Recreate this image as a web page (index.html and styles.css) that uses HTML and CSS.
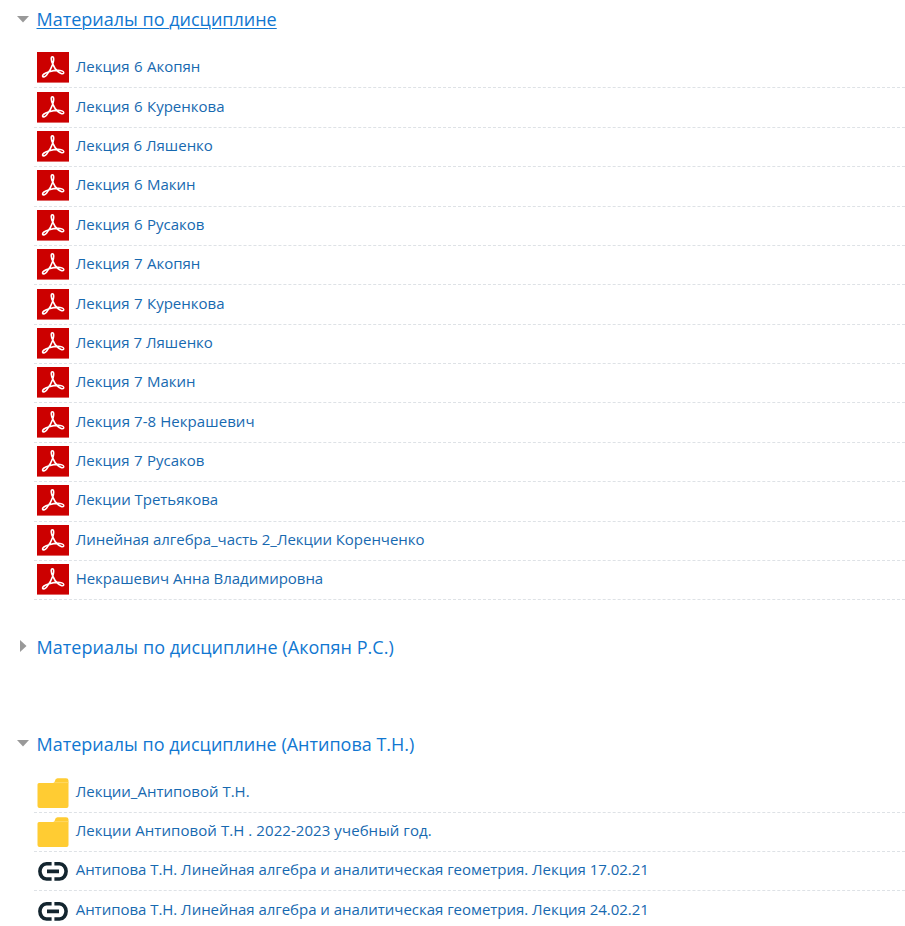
FILE: index.html
```html
<!DOCTYPE html>
<html lang="ru">
<head>
<meta charset="utf-8">
<title>Материалы по дисциплине</title>
<link rel="stylesheet" href="styles.css">
</head>
<body>
<svg class="sprite" aria-hidden="true">
  <symbol id="pdf" viewBox="0 0 32 31">
    <path fill="#c00" d="M0 0h32v30.6H0z"/>
    <path fill="none" stroke="#fff" stroke-width="1.6" stroke-linejoin="round" d="M15.8 12.1C13.9 8.3 13.7 4.7 15.4 4.7S17 8.4 15.8 12.1C14.7 15.6 12.2 20 9.5 23.2C7.7 25.3 5.9 25.2 5.6 24.2C5.2 22.7 8.4 20.7 12.1 19.7C16 18.7 20 18.2 23 18.5C26 18.8 27.1 20 26.6 21.1C25.9 22.5 22.8 21.5 20.4 19.2C18.2 17.1 16.7 14.2 15.8 12.1Z"/>
  </symbol>
  <symbol id="folder" viewBox="0 0 32 31">
    <path fill="#fc3" d="M2 5h14q1.700 0 2-2.300Q18.300.2 20.500.2H29q2.500 0 2.500 2.400V28q0 2-2 2H2.500q-2 0-2-2V6.500Q.5 5 2 5z"/>
    <path stroke="#ffdb70" stroke-width=".8" d="M17 4.600h14.500"/>
  </symbol>
  <symbol id="link" viewBox="0 0 32 31">
    <path fill="none" stroke="#13252f" stroke-width="3.600" d="M14.600 7.700H9.500C5.500 7.700 2.900 11.500 2.900 15.300S5.500 23 9.500 23h5.100M17.400 7.700h5.100c4 0 6.600 3.800 6.600 7.600S26.500 23 22.500 23h-5.100M10 15.400h12"/>
  </symbol>
  <symbol id="down" viewBox="0 0 12 7"><path fill="#999" d="M0 0h12L6 6.500z"/></symbol>
  <symbol id="right" viewBox="0 0 7 12"><path fill="#999" d="M0 0l6.500 6L0 12z"/></symbol>
</svg>
<main>
  <section class="topic first">
    <h3 class="heading"><svg class="down"><use href="#down"/></svg><a class="active">Материалы по дисциплине</a></h3>
    <ul class="list">
      <li><svg><use href="#pdf"/></svg><a class="spaced">Лекция 6 Акопян</a></li>
      <li><svg><use href="#pdf"/></svg><a class="spaced">Лекция 6 Куренкова</a></li>
      <li><svg><use href="#pdf"/></svg><a>Лекция 6 Ляшенко</a></li>
      <li><svg><use href="#pdf"/></svg><a class="spaced">Лекция 6 Макин</a></li>
      <li><svg><use href="#pdf"/></svg><a class="spaced">Лекция 6 Русаков</a></li>
      <li><svg><use href="#pdf"/></svg><a class="spaced">Лекция 7 Акопян</a></li>
      <li><svg><use href="#pdf"/></svg><a class="spaced">Лекция 7 Куренкова</a></li>
      <li><svg><use href="#pdf"/></svg><a>Лекция 7 Ляшенко</a></li>
      <li><svg><use href="#pdf"/></svg><a class="spaced">Лекция 7 Макин</a></li>
      <li><svg><use href="#pdf"/></svg><a class="wide">Лекция 7-8 Некрашевич</a></li>
      <li><svg><use href="#pdf"/></svg><a class="spaced">Лекция 7 Русаков</a></li>
      <li><svg><use href="#pdf"/></svg><a class="tight">Лекции Третьякова</a></li>
      <li><svg><use href="#pdf"/></svg><a class="tight">Линейная алгебра_часть 2_Лекции Коренченко</a></li>
      <li><svg><use href="#pdf"/></svg><a class="tight">Некрашевич Анна Владимировна</a></li>
    </ul>
  </section>
  <section class="topic closed">
    <h3 class="heading"><svg class="right"><use href="#right"/></svg><a class="loose">Материалы по дисциплине (Акопян Р.С.)</a></h3>
  </section>
  <section class="topic last">
    <h3 class="heading"><svg class="down"><use href="#down"/></svg><a>Материалы по дисциплине (Антипова Т.Н.)</a></h3>
    <ul class="list files">
      <li><svg><use href="#folder"/></svg><a>Лекции_Антиповой Т.Н.</a></li>
      <li><svg><use href="#folder"/></svg><a class="wide">Лекции Антиповой Т.Н . 2022-2023 учебный год.</a></li>
      <li><svg><use href="#link"/></svg><a class="tight">Антипова Т.Н. Линейная алгебра и аналитическая геометрия. Лекция 17.02.21</a></li>
      <li><svg><use href="#link"/></svg><a class="tight">Антипова Т.Н. Линейная алгебра и аналитическая геометрия. Лекция 24.02.21</a></li>
    </ul>
  </section>
</main>
</body>
</html>
```
FILE: styles.css
```css
* { box-sizing: border-box; }
html { overflow: hidden; }
body {
  margin: 0;
  height: 926px;
  overflow: hidden;
  background: #fff;
  font-family: "Segoe UI", "Open Sans", "Noto Sans", sans-serif;
}
.sprite { display: none; }
.heading {
  display: flex;
  align-items: center;
  height: 28px;
  margin: 0;
  padding-left: 17px;
  font-size: 18px;
  font-weight: 400;
  line-height: 28px;
  color: #1177d1;
  white-space: nowrap;
}
.heading svg { flex: none; margin-top: -2px; }
.heading a { margin-top: -2px; }
.last .heading a { margin-top: -0.500px; }
.heading .down { width: 12px; height: 7px; margin-right: 7.500px; }
.heading .right { width: 7px; height: 12px; margin-right: 9.500px; margin-left: 3px; }
.closed .heading svg { margin-top: -3px; }
.active { text-decoration: underline; text-decoration-thickness: 1px; text-underline-offset: 2px; }
.first { padding-top: 6px; }
.list { list-style: none; margin: 15px 0 0 34px; padding: 0; }
.list li {
  display: flex;
  align-items: flex-start;
  height: 39.375px;
  padding: 3.300px 0 0 3px;
  border-bottom: 1px dashed #dee2e6;
  font-size: 15px;
  line-height: 28px;
  color: #1769b0;
  white-space: nowrap;
}
.list svg { flex: none; width: 32px; height: 31px; margin-right: 6.700px; }
.files svg { margin-top: 1px; }
.tight { letter-spacing: -0.03px; }
.wide { letter-spacing: 0.07px; }
.loose { letter-spacing: 0.04px; }
.spaced { word-spacing: 0.500px; }
.closed { height: 96.500px; margin-top: 33.500px; }
```
